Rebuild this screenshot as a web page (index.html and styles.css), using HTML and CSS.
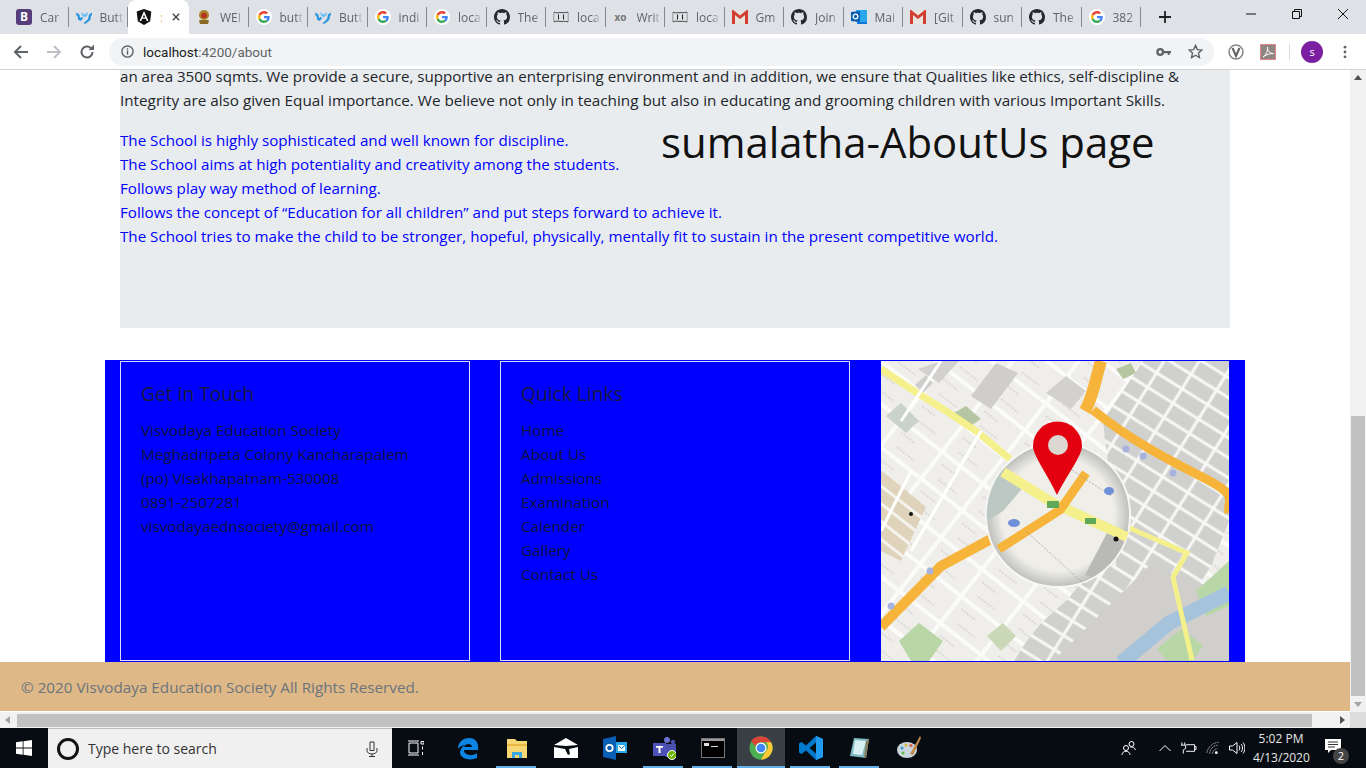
FILE: index.html
```html
<!DOCTYPE html>
<html>
<head>
<meta charset="utf-8">
<title>About</title>
<link rel="stylesheet" href="styles.css">
</head>
<body>
<svg class="defs" width="0" height="0">
  <defs>
    <symbol id="i-g" viewBox="-8 -8 64 64">
      <circle cx="24" cy="24" r="32" fill="#fff"/>
      <path fill="#EA4335" d="M24 9.5c3.54 0 6.71 1.22 9.21 3.6l6.85-6.85C35.9 2.38 30.47 0 24 0 14.62 0 6.51 5.38 2.56 13.22l7.98 6.19C12.43 13.72 17.74 9.5 24 9.5z"/>
      <path fill="#4285F4" d="M46.98 24.55c0-1.57-.15-3.09-.38-4.55H24v9.02h12.94c-.58 2.96-2.26 5.48-4.78 7.18l7.73 6c4.51-4.18 7.09-10.36 7.09-17.65z"/>
      <path fill="#FBBC05" d="M10.53 28.59c-.48-1.45-.76-2.99-.76-4.59s.27-3.14.76-4.59l-7.98-6.19C.92 16.46 0 20.12 0 24c0 3.88.92 7.54 2.56 10.78l7.97-6.19z"/>
      <path fill="#34A853" d="M24 48c6.48 0 11.93-2.13 15.89-5.81l-7.73-6c-2.15 1.45-4.92 2.3-8.16 2.3-6.26 0-11.57-4.22-13.47-9.91l-7.98 6.19C6.51 42.62 14.62 48 24 48z"/>
    </symbol>
    <symbol id="i-gh" viewBox="0 0 16 16">
      <path fill="#24292e" d="M8 0C3.58 0 0 3.58 0 8c0 3.54 2.29 6.53 5.47 7.59.4.07.55-.17.55-.38 0-.19-.01-.82-.01-1.49-2.01.37-2.53-.49-2.69-.94-.09-.23-.48-.94-.82-1.13-.28-.15-.68-.52-.01-.53.63-.01 1.08.58 1.23.82.72 1.21 1.87.87 2.33.66.07-.52.28-.87.51-1.07-1.78-.2-3.64-.89-3.64-3.95 0-.87.31-1.59.82-2.15-.08-.2-.36-1.02.08-2.12 0 0 .67-.21 2.2.82.64-.18 1.32-.27 2-.27.68 0 1.36.09 2 .27 1.53-1.04 2.2-.82 2.2-.82.44 1.1.16 1.92.08 2.12.51.56.82 1.27.82 2.15 0 3.07-1.87 3.75-3.65 3.95.29.25.54.73.54 1.48 0 1.07-.01 1.93-.01 2.2 0 .21.15.46.55.38A8.013 8.013 0 0016 8c0-4.42-3.58-8-8-8z"/>
    </symbol>
    <symbol id="i-mdb" viewBox="0 0 16 16">
      <path fill="#2a94e2" d="M0 3.500l3.500 2 .5 3.500 2-1.200L7 9.500 4.500 12 2 10.500 1.500 6.500l-1 .5z"/>
      <path fill="#2a94e2" d="M16 3.500l-3 2-1 4.500-2.500 2.500-2 1.500 1.500 1 3-2 2.500-2.500.5-3.500 1-1z"/>
      <path fill="#6cc0f2" d="M5 3l3.500 2.500L12 3l-.8 3.500L8.500 8.500 6 6.500z"/>
    </symbol>
    <symbol id="i-gmail" viewBox="0 0 16 14">
      <path fill="#e8e4df" d="M1 1h14v13H1z"/>
      <path fill="#d0d0d0" d="M3 3l5 4 5-4v2L8 9 3 5z"/>
      <path fill="#d23f31" d="M0 0h1.200L8 5.500 14.800 0H16v14h-3V5L8 9 3 5v9H0z"/>
    </symbol>
    <symbol id="i-local" viewBox="0 0 16 14">
      <path fill="none" stroke="#222" stroke-width=".8" d="M1 2c1 1 4 1 7 .5 3 .5 6 0 7-.5M1 12c1-1 4-1 7-.5 3-.5 6 0 7 .5"/>
      <path fill="none" stroke="#222" stroke-width=".8" stroke-dasharray="1 1" d="M.8 2.500v9M15.200 2.500v9"/>
      <path fill="none" stroke="#222" d="M5.500 4.500v5M10.500 4.500v5"/>
    </symbol>
    <pattern id="blocks-light" width="52" height="34" patternUnits="userSpaceOnUse" patternTransform="rotate(38)">
      <rect width="52" height="34" fill="#fbfbfa"/>
      <rect x="2" y="2" width="48" height="30" fill="#efeeea"/>
      <path d="M8 10h18M14 24h22" stroke="#8a8a86" stroke-width=".8" stroke-dasharray="2 1.500" opacity=".55"/>
    </pattern>
    <pattern id="blocks-gray" width="30" height="17" patternUnits="userSpaceOnUse" patternTransform="rotate(32)">
      <rect width="30" height="17" fill="#f8f8f6"/>
      <rect x="1.500" y="1.500" width="27" height="14" fill="#d0d0cf"/>
    </pattern>
    <pattern id="blocks-tan" width="30" height="14" patternUnits="userSpaceOnUse" patternTransform="rotate(38)">
      <rect width="30" height="14" fill="#f5f3ee"/>
      <rect y="2" width="30" height="11" fill="#dfd4bb"/>
    </pattern>
    <radialGradient id="lens" cx="50%" cy="50%" r="50%">
      <stop offset="78%" stop-color="#efeee9"/>
      <stop offset="100%" stop-color="#bdbdba"/>
    </radialGradient>
  </defs>
</svg>

<div class="window">
  <div class="tabstrip">
    <div class="tab"><span class="fav-b">B</span><span class="tab-label">Car</span></div>
    <div class="tab"><svg class="fav"><use href="#i-mdb"/></svg><span class="tab-label">Butt</span></div>
    <div class="tab tab-active">
      <svg class="fav" viewBox="0 0 16 16"><path fill="#111" d="M8 0l7.300 2.600-1.100 9.700L8 16l-6.200-3.700L.7 2.600z"/><path fill="#fff" d="M8 2L3.500 12h1.700l.9-2.300h3.800l.9 2.300h1.700zM8 5.700l1.300 2.800H6.700z"/></svg>
      <span class="tab-colon">:</span>
      <svg class="tab-close" viewBox="0 0 10 10"><path d="M1 1l8 8M9 1l-8 8" stroke="#3c4043" stroke-width="1.600"/></svg>
    </div>
    <div class="tab"><svg class="fav" viewBox="0 0 16 16"><circle cx="8" cy="6" r="5" fill="#a9862e"/><circle cx="8" cy="6.500" r="2.800" fill="#b8321e"/><path d="M3 11h10l-1 4H4z" fill="#8d6a24"/></svg><span class="tab-label">WEI</span></div>
    <div class="tab"><svg class="fav"><use href="#i-g"/></svg><span class="tab-label">butt</span></div>
    <div class="tab"><svg class="fav"><use href="#i-mdb"/></svg><span class="tab-label">Butt</span></div>
    <div class="tab"><svg class="fav"><use href="#i-g"/></svg><span class="tab-label">indi</span></div>
    <div class="tab"><svg class="fav"><use href="#i-g"/></svg><span class="tab-label">loca</span></div>
    <div class="tab"><svg class="fav"><use href="#i-gh"/></svg><span class="tab-label">The</span></div>
    <div class="tab"><svg class="fav"><use href="#i-local"/></svg><span class="tab-label">loca</span></div>
    <div class="tab"><span class="fav-xo">xo</span><span class="tab-label">Writ</span></div>
    <div class="tab"><svg class="fav"><use href="#i-local"/></svg><span class="tab-label">loca</span></div>
    <div class="tab"><svg class="fav"><use href="#i-gmail"/></svg><span class="tab-label">Gm</span></div>
    <div class="tab"><svg class="fav"><use href="#i-gh"/></svg><span class="tab-label">Join</span></div>
    <div class="tab"><svg class="fav" viewBox="0 0 16 16"><path fill="#28a8ea" d="M5 1h11v12H5z"/><path fill="#0a5fb4" d="M0 3l9-1v11l-9-1z"/><circle cx="4.500" cy="7.500" r="2.300" fill="none" stroke="#fff" stroke-width="1.300"/><path fill="#0f78d4" d="M6 13h10v2H6z"/></svg><span class="tab-label">Mai</span></div>
    <div class="tab"><svg class="fav"><use href="#i-gmail"/></svg><span class="tab-label">[Git</span></div>
    <div class="tab"><svg class="fav"><use href="#i-gh"/></svg><span class="tab-label">sun</span></div>
    <div class="tab"><svg class="fav"><use href="#i-gh"/></svg><span class="tab-label">The</span></div>
    <div class="tab"><svg class="fav"><use href="#i-g"/></svg><span class="tab-label">382</span></div>
    <svg class="new-tab" viewBox="0 0 12 12"><path d="M6 0v12M0 6h12" stroke="#202124" stroke-width="1.800"/></svg>
    <div class="win-controls">
      <svg class="win-btn" viewBox="0 0 12 12"><path d="M1 6h10" stroke="#111"/></svg>
      <svg class="win-btn" viewBox="0 0 12 12"><path d="M1.500 3.500h7v7h-7zM3.500 3.500v-2h7v7h-2" fill="none" stroke="#111"/></svg>
      <svg class="win-btn" viewBox="0 0 12 12"><path d="M1 1l10 10M11 1L1 11" stroke="#111"/></svg>
    </div>
  </div>

  <div class="toolbar">
    <svg class="nav-icon" viewBox="0 0 16 16"><path d="M15 8H2M8 2L2 8l6 6" fill="none" stroke="#5f6368" stroke-width="2"/></svg>
    <svg class="nav-icon" viewBox="0 0 16 16"><path d="M1 8h13M8 2l6 6-6 6" fill="none" stroke="#bdc1c6" stroke-width="2"/></svg>
    <svg class="nav-icon" viewBox="0 0 16 16"><path d="M13.500 8A5.500 5.500 0 1 1 11.800 4" fill="none" stroke="#5f6368" stroke-width="2"/><path d="M9.500 6H15V.5z" fill="#5f6368"/></svg>
    <div class="omnibox">
      <svg class="omni-info" viewBox="0 0 14 14"><circle cx="7" cy="7" r="6" fill="none" stroke="#5f6368" stroke-width="1.500"/><path d="M7 6v4.500M7 3.500v1.500" stroke="#5f6368" stroke-width="1.500"/></svg>
      <span class="url"><b>localhost</b>:4200/about</span>
      <svg class="omni-key" viewBox="0 0 16 10"><circle cx="4.500" cy="5" r="3" fill="none" stroke="#5f6368" stroke-width="2.500"/><path d="M7 3.800h9v2.500h-1.500v2h-2v-2H7z" fill="#5f6368"/></svg>
      <svg class="omni-star" viewBox="0 0 16 16"><path d="M8 1.500l2 4.500 4.800.5-3.600 3.200 1 4.800L8 12l-4.200 2.500 1-4.800L1.200 6.500 6 6z" fill="none" stroke="#5f6368" stroke-width="1.500"/></svg>
    </div>
    <svg class="ext-v" viewBox="0 0 16 16"><circle cx="8" cy="8" r="7" fill="none" stroke="#8a8a8a" stroke-width="1.600"/><path d="M4.500 4l3.500 8 3.500-8" fill="none" stroke="#5f5f5f" stroke-width="2"/></svg>
    <svg class="ext-pdf" viewBox="0 0 16 16"><rect x=".5" y=".5" width="15" height="15" fill="#8d8583" stroke="#e08b80"/><path d="M3 13c3-2 5-6 4.500-10 0 4 2.500 6.500 6 6.500-4 0-7 1-10.500 3.500z" fill="none" stroke="#fff"/></svg>
    <span class="tool-sep"></span>
    <span class="avatar">s</span>
    <svg class="kebab" viewBox="0 0 4 16"><circle cx="2" cy="2.500" r="1.600" fill="#5f6368"/><circle cx="2" cy="8" r="1.600" fill="#5f6368"/><circle cx="2" cy="13.500" r="1.600" fill="#5f6368"/></svg>
  </div>

  <div class="viewport">
    <div class="page">
      <div class="page-scroll">
        <section class="about">
          <p class="about-text">an area 3500 sqmts. We provide a secure, supportive an enterprising environment and in addition, we ensure that Qualities like ethics, self-discipline &amp;<br>Integrity are also given Equal importance. We believe not only in teaching but also in educating and grooming children with various Important Skills.</p>
          <p class="about-points">The School is highly sophisticated and well known for discipline.<br>
          The School aims at high potentiality and creativity among the students.<br>
          Follows play way method of learning.<br>
          Follows the concept of “Education for all children” and put steps forward to achieve it.<br>
          The School tries to make the child to be stronger, hopeful, physically, mentally fit to sustain in the present competitive world.</p>
          <h1 class="page-title">sumalatha-AboutUs page</h1>
        </section>

        <footer class="site-footer">
          <div class="foot-col">
            <h5>Get in Touch</h5>
            <div>Visvodaya Education Society</div>
            <div>Meghadripeta Colony Kancharapalem</div>
            <div>(po) Visakhapatnam-530008</div>
            <div>0891-2507281</div>
            <div>visvodayaednsociety@gmail.com</div>
          </div>
          <div class="foot-col">
            <h5>Quick Links</h5>
            <div>Home</div>
            <div>About Us</div>
            <div>Admissions</div>
            <div>Examination</div>
            <div>Calender</div>
            <div>Gallery</div>
            <div>Contact Us</div>
          </div>
          <div class="foot-map">
            <svg class="map" viewBox="0 0 348 300" preserveAspectRatio="none">
              <rect width="348" height="300" fill="url(#blocks-light)"/>
              <!-- grey city blocks on the right -->
              <path d="M222 60L262 0H348V160L322 225 262 205 235 205 235 170z" fill="url(#blocks-gray)"/>
              <path d="M130 300L160 262 185 240 215 205 262 205 290 225 240 300z" fill="url(#blocks-gray)"/>
              <!-- single blocks top left -->
              <path d="M37 8L60 0H78L58 22z" fill="#d2d1cf"/>
              <path d="M90 35L115 2 137 12 110 48z" fill="#cfcecc"/>
              <path d="M34 24L45 14 52 22 42 32z" fill="#cfcecc"/>
              <path d="M165 32L185 15 205 30 190 48z" fill="#d2d1cf"/>
              <path d="M5 55L20 42 38 60 25 72z" fill="#c9d3cb"/>
              <path d="M73 52L85 45 100 58 85 68z" fill="#b6c6a2"/>
              <path d="M235 8L250 2 255 12 242 18z" fill="#b6c6a2"/>
              <!-- tan area left -->
              <path d="M0 109L45 146 20 200 0 190z" fill="url(#blocks-tan)"/>
              <!-- water and parks bottom right -->
              <path d="M172 300L268 205 348 232V300z" fill="#d1cfcc"/>
              <path d="M315 230L348 200V245L325 255z" fill="#b9d6a6"/>
              <path d="M18 280L38 262 62 280 48 300H30z" fill="#b9d6a6"/>
              <path d="M106 275L122 262 135 275 120 290z" fill="#c9d8b6"/>
              <path d="M276 288L300 268 322 284 312 300H286z" fill="#b9d6a6"/>
              <path d="M240 302L288 262 348 232" fill="none" stroke="#a5c3da" stroke-width="15"/>
              <!-- roads -->
              <path d="M0 8L30 28 65 50 95 70 129 98" fill="none" stroke="#f4f08c" stroke-width="7"/>
              <path d="M246 166L306 192 292 216 311 299" fill="none" stroke="#f4f08c" stroke-width="5"/>
              <path d="M220 0C214 20 212 36 204 50" fill="none" stroke="#f6b43a" stroke-width="12"/>
              <path d="M212 49C250 80 290 100 325 118S345 140 348 152" fill="none" stroke="#f6b43a" stroke-width="9"/>
              <path d="M0 266L60 205 110 178" fill="none" stroke="#f6b43a" stroke-width="10"/>
              <path d="M60 0L20 60 M100 70L30 190 M30 110L0 170 M170 60L120 130" fill="none" stroke="#fff" stroke-width="3"/>
              <g fill="#a7b2de"><circle cx="245" cy="88" r="3.500"/><circle cx="262" cy="95" r="3.500"/><circle cx="292" cy="112" r="3.500"/><circle cx="49" cy="210" r="3.500"/><circle cx="10" cy="245" r="3.500"/></g>
              <!-- magnifier -->
              <circle cx="177" cy="154" r="72" fill="url(#lens)" stroke="#f7f7f5" stroke-width="2"/>
              <path d="M124 106A72 72 0 0 0 106 160L122 150 146 122z" fill="#bcc8c4"/>
              <path d="M212 216A71 71 0 0 0 247 168L226 172 204 214z" fill="#b9b9b7"/>
              <path d="M122 111L172 142 246 176" fill="none" stroke="#f4f08c" stroke-width="10"/>
              <path d="M118 188L179 149 205 112" fill="none" stroke="#f6b43a" stroke-width="9"/>
              <path d="M145 170L205 225M185 105L230 135" fill="none" stroke="#8a8a86" stroke-width="1" stroke-dasharray="2 1.500" opacity=".6"/>
              <circle cx="235" cy="178" r="2.500" fill="#111"/>
              <circle cx="30" cy="153" r="2" fill="#111"/>
              <rect x="166" y="140" width="12" height="7" fill="#5fa85a"/>
              <rect x="204" y="157" width="11" height="6" fill="#5fa85a"/>
              <ellipse cx="133" cy="162" rx="6" ry="4" fill="#6f8fd8"/>
              <ellipse cx="228" cy="130" rx="5" ry="4" fill="#6f8fd8"/>
              <path d="M176 134C166 112 152 95 152 85a24.500 24.500 0 0 1 49 0C201 95 187 112 176 134z" fill="#e3000f"/>
              <circle cx="177" cy="84" r="10" fill="#dcd7d0"/>
            </svg>
          </div>
        </footer>

        <div class="copyright">© 2020 Visvodaya Education Society All Rights Reserved.</div>
      </div>
      <div class="scroll-h">
        <svg class="sb-arrow" viewBox="0 0 16 16"><path d="M10 4L5 8l5 4z" fill="#a3a3a3"/></svg>
        <div class="scroll-h-track"><div class="scroll-h-thumb"></div></div>
        <svg class="sb-arrow" viewBox="0 0 16 16"><path d="M6 4l5 4-5 4z" fill="#505050"/></svg>
      </div>
    </div>
    <div class="scroll-v">
      <svg class="sb-arrow" viewBox="0 0 16 16"><path d="M4 10l4-5 4 5z" fill="#505050"/></svg>
      <div class="scroll-v-track"><div class="scroll-v-thumb"></div></div>
      <svg class="sb-arrow" viewBox="0 0 16 16"><path d="M4 6l4 5 4-5z" fill="#a3a3a3"/></svg>
      <div class="sb-corner"></div>
    </div>
  </div>

  <div class="taskbar">
    <div class="start">
      <svg class="start-logo" viewBox="0 0 16 16"><path fill="#fff" d="M0 2.300l6.700-1v6.300H0zM7.500 1.200L16 0v7.600H7.500zM0 8.400h6.700v6.300l-6.700-1zM7.500 8.400H16V16l-8.500-1.200z"/></svg>
    </div>
    <div class="search">
      <span class="cortana"></span>
      <span class="search-text">Type here to search</span>
      <svg class="search-mic" viewBox="0 0 12 16"><path d="M4 1h4v8.500H4zM1 7v2.500c0 2 2 3.500 5 3.500s5-1.500 5-3.500V7M6 13v2.500M3 15.500h6" fill="none" stroke="#333"/></svg>
    </div>
    <div class="task-slot task-view">
      <svg class="task-icon-sm" viewBox="0 0 16 16"><path d="M1 3h9v10H1zM0 1h11M0 15h11M13 1.500h3v2.500h-3zM14.500 6.500v3M14.500 12v3" fill="none" stroke="#fff"/></svg>
    </div>
    <div class="task-slot">
      <svg class="task-icon" viewBox="0 0 24 24"><path fill="#0c84e4" d="M2 13C2 6 7 2 13 2c6 0 10 4 9 12H8c0 5 8 7 13 3v5c-7 3-16 1-17-5 0-3 2-7 6-8-3 0-6 1-8 4zm6-2h8c0-4-7-4-8 0z"/></svg>
    </div>
    <div class="task-slot task-open">
      <svg class="task-icon" viewBox="0 0 24 24"><path fill="#f7d774" d="M2 3h8l2 2h10v17H2z"/><path fill="#e8b93f" d="M2 8h20v2H2z"/><path fill="#3ba7e0" d="M7 22v-6h10v6h-3v-3h-4v3z"/></svg>
    </div>
    <div class="task-slot">
      <svg class="task-icon" viewBox="0 0 24 24"><path fill="#fff" d="M0 9L12 2l12 7-12 1zM0 11l11 2 3 6 2-1-1-5 9-2v11H0z"/></svg>
    </div>
    <div class="task-slot">
      <svg class="task-icon" viewBox="0 0 24 24"><path fill="#28a8ea" d="M10 6h14v11H10z"/><path fill="#fff" d="M15 9h7v6h-7z"/><path d="M16 10l2.500 2.500L22 9.500" fill="none" stroke="#0f78d4"/><path fill="#0a5fb4" d="M0 3l13-3v24L0 21z"/><circle cx="6.500" cy="12" r="3.200" fill="none" stroke="#fff" stroke-width="1.800"/></svg>
    </div>
    <div class="task-slot task-open">
      <svg class="task-icon" viewBox="0 0 24 24"><circle cx="15" cy="4" r="3" fill="#6f72cf"/><circle cx="21" cy="6" r="2.200" fill="#4b4fad"/><path fill="#4b4fad" d="M12 8h12v9l-4 4h-6l-2-3z"/><rect x="1" y="7" width="13" height="13" fill="#4e52b8"/><path fill="#fff" d="M4 10h7v1.800H8.500V17h-2v-5.200H4z"/><circle cx="20" cy="19" r="4.500" fill="#6bb700" stroke="#fff"/><path d="M18 19l1.500 1.500 2.500-3" fill="none" stroke="#fff"/></svg>
    </div>
    <div class="task-slot task-open">
      <svg class="task-icon" viewBox="0 0 24 24"><rect x=".5" y="2.500" width="23" height="19" fill="#000" stroke="#777"/><rect x="1" y="3" width="22" height="2" fill="#9a9a9a"/><path d="M3 7h5v3H3zM10 10h7v1h-7z" fill="#ddd"/></svg>
    </div>
    <div class="task-slot task-current">
      <svg class="task-icon" viewBox="0 0 48 48">
        <circle cx="24" cy="24" r="23" fill="#4caf50"/>
        <path d="M24 1a23 23 0 0 1 20 11.500H24a11.500 11.500 0 0 0-11 8L4 10A23 23 0 0 1 24 1z" fill="#db4437"/>
        <path d="M44 12.500A23 23 0 0 1 24 47l10-17a11.500 11.500 0 0 0 0-17.500z" fill="#fcc934"/>
        <circle cx="24" cy="24" r="11" fill="#fff"/><circle cx="24" cy="24" r="8.500" fill="#4285f4"/>
      </svg>
    </div>
    <div class="task-slot task-open">
      <svg class="task-icon" viewBox="0 0 24 24"><path fill="#007acc" d="M17 0l7 3v18l-7 3L7 14.500 2.500 18 0 16.500V7.500L2.500 6 7 9.500zM17 6.500L10.500 12l6.500 5.500z"/><path fill="#1f9cf0" d="M17 0l7 3v18l-7 3z"/></svg>
    </div>
    <div class="task-slot task-open">
      <svg class="task-icon" viewBox="0 0 24 24"><path fill="#7fb9c4" d="M6 2l15 1-3 19-16-2z"/><path fill="#d8eef0" d="M7 4l11 1-4 14-9-1z"/><path fill="#8a7a5a" d="M18 5l3-2-3 19-2 0z"/></svg>
    </div>
    <div class="task-slot">
      <svg class="task-icon" viewBox="0 0 24 24"><ellipse cx="10" cy="14" rx="10" ry="8" fill="#c9d6dd"/><circle cx="5" cy="12" r="1.600" fill="#3c9ad6"/><circle cx="9" cy="9" r="1.600" fill="#e0b930"/><circle cx="14" cy="9.500" r="1.600" fill="#d95b43"/><circle cx="6" cy="17" r="1.600" fill="#6bb84a"/><path d="M23 0l1 2-8 17-3-1z" fill="#c08a4a"/></svg>
    </div>

    <div class="tray">
      <svg class="tray-person" viewBox="0 0 16 16"><circle cx="10.500" cy="4" r="2.500" fill="none" stroke="#fff"/><circle cx="5" cy="8" r="2.500" fill="none" stroke="#fff"/><path d="M1 15c0-5 8-5 8 0M9 7c3-.5 5 1 5.500 3" fill="none" stroke="#fff"/></svg>
      <svg class="tray-chev" viewBox="0 0 12 8"><path d="M.5 7L6 1.500 11.500 7" fill="none" stroke="#fff"/></svg>
      <svg class="tray-batt" viewBox="0 0 18 12"><path d="M6.500 2.500h9v7h-9M15.500 4.500H17v3h-1.500" fill="none" stroke="#fff"/><path d="M2 0v3M5 0v3M1 3h5v3.500L3.500 8v4" fill="none" stroke="#fff"/></svg>
      <svg class="tray-wifi" viewBox="0 0 16 14"><path d="M1 12a13 13 0 0 1 13-11M4 13a9 9 0 0 1 9-9M7 13a5 5 0 0 1 5-5" fill="none" stroke="#bbb" stroke-dasharray="1.500 .8"/><circle cx="11" cy="12" r="1.500" fill="#fff"/></svg>
      <svg class="tray-vol" viewBox="0 0 16 14"><path d="M.5 5h3L8 1.500v11L3.500 9h-3zM10 4.500c1 1.500 1 3.500 0 5M12 3c2 2 2 6 0 8M14 1.500c2.500 3 2.500 8 0 11" fill="none" stroke="#fff"/></svg>
      <div class="clock"><div>5:02 PM</div><div>4/13/2020</div></div>
      <div class="notify">
        <svg class="notify-icon" viewBox="0 0 16 15"><path fill="#fff" d="M0 0h16v11H6l-3 3v-3H0z"/><path d="M3 3h10M3 5.500h10M3 8h7" stroke="#333"/></svg>
        <span class="notify-badge">2</span>
      </div>
    </div>
  </div>
</div>
</body>
</html>
```

FILE: styles.css
```css
html, body {
  margin: 0;
  padding: 0;
  overflow: hidden;
}
body {
  font-family: "Open Sans", "Noto Sans", sans-serif;
  font-size: 15.25px;
  color: #212529;
}
.defs {
  position: absolute;
}
.window {
  width: 1366px;
  height: 768px;
  display: flex;
  flex-direction: column;
}

/* tab strip */
.tabstrip {
  height: 34px;
  background: #dee1e6;
  display: flex;
  align-items: center;
  padding-left: 9px;
  flex: none;
}
.tab {
  width: 59.5px;
  height: 34px;
  box-sizing: border-box;
  display: flex;
  align-items: center;
  padding-left: 7px;
  position: relative;
  flex: none;
}
.tab::after {
  content: "";
  position: absolute;
  right: 0;
  top: 7px;
  height: 20px;
  width: 1px;
  background: #85888c;
}
.tab-active {
  background: #fff;
  border-radius: 8px 8px 0 0;
  padding-left: 8px;
  width: 61px;
}
.tab-active::after {
  display: none;
}
.fav {
  width: 16px;
  height: 16px;
  flex: none;
}
.fav-b {
  width: 16px;
  height: 16px;
  flex: none;
  background: #563d7c;
  color: #fff;
  border-radius: 3px;
  font-size: 12px;
  font-weight: 700;
  line-height: 16px;
  text-align: center;
}
.fav-xo {
  width: 16px;
  flex: none;
  font-size: 10px;
  font-weight: 700;
  color: #777;
  text-align: center;
}
.tab-label {
  margin-left: 8px;
  font-size: 12px;
  color: #5f6368;
  width: 24px;
  white-space: nowrap;
  -webkit-mask-image: linear-gradient(to right, #000 65%, transparent);
  mask-image: linear-gradient(to right, #000 65%, transparent);
}
.tab-colon {
  margin-left: 8px;
  font-size: 12px;
  color: #e8c170;
}
.tab-close {
  width: 8px;
  height: 8px;
  margin-left: 9px;
}
.new-tab {
  width: 12px;
  height: 12px;
  margin-left: 18px;
}
.win-controls {
  margin-left: auto;
  display: flex;
  align-self: flex-start;
  padding-top: 8px;
  padding-right: 17px;
  gap: 34px;
}
.win-btn {
  width: 12px;
  height: 12px;
}

/* toolbar */
.toolbar {
  height: 36px;
  background: #fff;
  border-bottom: 1px solid #d2d3d5;
  box-sizing: border-box;
  display: flex;
  align-items: center;
  padding-left: 13px;
  flex: none;
}
.nav-icon {
  width: 16px;
  height: 16px;
  margin-right: 17px;
  flex: none;
}
.omnibox {
  margin-left: -3px;
  width: 1105px;
  height: 28px;
  background: #f1f3f4;
  border-radius: 14px;
  display: flex;
  align-items: center;
  padding-left: 12px;
  box-sizing: border-box;
  flex: none;
}
.omni-info {
  width: 13px;
  height: 13px;
}
.url {
  margin-left: 9px;
  font-family: "Roboto", sans-serif;
  font-size: 13.5px;
  color: #5f6368;
}
.url b {
  font-weight: 400;
  color: #202124;
}
.omni-key {
  width: 15px;
  height: 10px;
  margin-left: auto;
}
.omni-star {
  width: 15px;
  height: 15px;
  margin-left: 17px;
  margin-right: 11px;
}
.ext-v {
  width: 16px;
  height: 16px;
  margin-left: 14px;
}
.ext-pdf {
  width: 16px;
  height: 16px;
  margin-left: 16px;
}
.tool-sep {
  width: 1px;
  height: 16px;
  background: #dadce0;
  margin-left: 13px;
}
.avatar {
  width: 22px;
  height: 22px;
  border-radius: 50%;
  background: #7b1fa2;
  color: #fff;
  font-size: 11px;
  line-height: 21px;
  text-align: center;
  margin-left: 11px;
}
.kebab {
  width: 4px;
  height: 14px;
  margin-left: 20px;
}

/* page */
.viewport {
  flex: 1;
  display: flex;
  min-height: 0;
}
.page {
  flex: 1;
  display: flex;
  flex-direction: column;
  min-width: 0;
}
.page-scroll {
  flex: 1;
  min-height: 0;
}
.about {
  position: relative;
  display: flow-root;
  width: 1110px;
  height: 258px;
  margin-left: 120px;
  background: #e9ecef;
}
.about p {
  margin: 0;
  line-height: 24px;
  white-space: nowrap;
}
.about .about-text {
  margin-top: -6px;
  color: #212529;
}
.about-text::first-line {
  font-size: 15.12px;
}
.about-points {
  padding-top: 16px;
  font-size: 15.17px;
  color: #0000ff;
}
.page-title {
  position: absolute;
  left: 541px;
  top: 45px;
  margin: 0;
  font-size: 41.9px;
  font-weight: 400;
  line-height: 54px;
  color: #111;
}
.site-footer {
  margin: 32px 0 0 105px;
  width: 1140px;
  height: 302px;
  box-sizing: border-box;
  background: #0000ff;
  padding: 1px 15px;
  display: grid;
  grid-template-columns: repeat(3, 350px);
  column-gap: 30px;
}
.foot-col {
  border: 1px solid #dcdcf2;
  box-sizing: border-box;
  padding: 20px;
  line-height: 24px;
  color: #12123a;
  white-space: nowrap;
}
.foot-col h5 {
  margin: 0 0 12px;
  font-size: 19.2px;
  font-weight: 500;
  line-height: 24px;
  color: #1a1a40;
}
.foot-map {
  padding: 0 1px;
}
.map {
  display: block;
  width: 348px;
  height: 300px;
}
.copyright {
  height: 49px;
  background: #deb887;
  color: #6c757d;
  line-height: 50px;
  padding-left: 21px;
}

/* scrollbars */
.scroll-h {
  height: 17px;
  background: #f1f1f1;
  border-top: 1px solid #fff;
  box-sizing: border-box;
  display: flex;
  align-items: center;
  flex: none;
}
.sb-arrow {
  width: 16px;
  height: 16px;
  flex: none;
}
.scroll-h-track {
  flex: 1;
}
.scroll-h-thumb {
  width: 1295px;
  margin-left: 1px;
  height: 13px;
  background: #c1c1c1;
}
.scroll-v {
  width: 16px;
  background: #f1f1f1;
  display: flex;
  flex-direction: column;
  flex: none;
}
.scroll-v-track {
  flex: 1;
  display: flex;
  flex-direction: column;
  justify-content: flex-end;
}
.scroll-v-thumb {
  height: 280px;
  margin: 0 1px;
  background: #c1c1c1;
}
.sb-corner {
  height: 16px;
  background: #dcdcdc;
}

/* taskbar */
.taskbar {
  height: 40px;
  background: #070c12;
  display: flex;
  flex: none;
}
.start {
  width: 48px;
  display: flex;
  align-items: center;
  justify-content: center;
}
.start-logo {
  width: 16px;
  height: 16px;
}
.search {
  width: 344px;
  background: #f0f0f0;
  border-top: 1px solid #bcbcbc;
  box-sizing: border-box;
  display: flex;
  align-items: center;
  padding-left: 9px;
}
.cortana {
  width: 22px;
  height: 22px;
  box-sizing: border-box;
  border: 3px solid #111;
  border-radius: 50%;
}
.search-text {
  margin-left: 9px;
  font-size: 14px;
  color: #333;
}
.search-mic {
  width: 12px;
  height: 16px;
  margin-left: auto;
  margin-right: 14px;
}
.task-slot {
  width: 49px;
  display: flex;
  align-items: center;
  justify-content: center;
  position: relative;
  flex: none;
}
.task-view {
  width: 51px;
  padding-right: 3px;
  box-sizing: border-box;
}
.task-open::after, .task-current::after {
  content: "";
  position: absolute;
  left: 4px;
  right: 5px;
  bottom: 0;
  height: 2px;
  background: #63b0ea;
}
.task-current {
  width: 48px;
  margin-right: 1px;
  background: #3a3f46;
}
.task-current::after {
  left: 0;
  right: 0;
}
.task-icon {
  width: 24px;
  height: 24px;
}
.task-icon-sm {
  width: 16px;
  height: 16px;
}
.tray {
  margin-left: auto;
  display: flex;
  align-items: center;
  padding-right: 9px;
  color: #fff;
}
.tray-person {
  width: 16px;
  height: 16px;
}
.tray-chev {
  width: 12px;
  height: 8px;
  margin-left: 22px;
}
.tray-batt {
  width: 17px;
  height: 12px;
  margin-left: 9.500px;
}
.tray-wifi {
  width: 15px;
  height: 14px;
  margin-left: 9px;
}
.tray-vol {
  width: 16px;
  height: 14px;
  margin-left: 7.500px;
}
.clock {
  width: 56px;
  margin-left: 8.500px;
  text-align: center;
  font-size: 12px;
  line-height: 19px;
  color: #e6e6e6;
}
.notify {
  position: relative;
  width: 48px;
  height: 40px;
  display: flex;
  align-items: center;
  justify-content: center;
}
.notify-icon {
  width: 16px;
  height: 15px;
  margin-top: -4px;
}
.notify-badge {
  position: absolute;
  left: 24px;
  top: 20px;
  width: 16px;
  height: 16px;
  border-radius: 50%;
  background: #444;
  font-size: 11px;
  line-height: 16px;
  text-align: center;
  color: #fff;
}
```
